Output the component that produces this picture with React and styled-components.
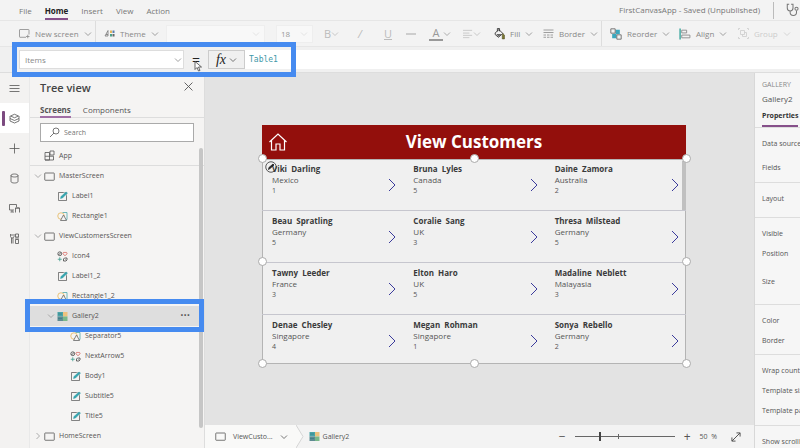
import React from "react";
import styled, { createGlobalStyle } from "styled-components";

const MENU = ["File", "Home", "Insert", "View", "Action"];

const TREE = [
  { name: "App", kind: "app", level: 0, ruled: true },
  { name: "MasterScreen", kind: "screen", level: 0, chevron: "down" },
  { name: "Label1", kind: "label", level: 1 },
  { name: "Rectangle1", kind: "shape", level: 1 },
  { name: "ViewCustomersScreen", kind: "screen", level: 0, chevron: "down" },
  { name: "Icon4", kind: "icons", level: 1 },
  { name: "Label1_2", kind: "label", level: 1 },
  { name: "Rectangle1_2", kind: "shape", level: 1 },
  { name: "Gallery2", kind: "gallery", level: 1, chevron: "down", selected: true },
  { name: "Separator5", kind: "shape", level: 2 },
  { name: "NextArrow5", kind: "icons", level: 2 },
  { name: "Body1", kind: "label", level: 2 },
  { name: "Subtitle5", kind: "label", level: 2 },
  { name: "Title5", kind: "label", level: 2 },
  { name: "HomeScreen", kind: "screen", level: 0, chevron: "right" },
];

const CUSTOMERS = [
  ["Viki", "Darling", "Mexico", 1],
  ["Bruna", "Lyles", "Canada", 5],
  ["Daine", "Zamora", "Australia", 2],
  ["Beau", "Spratling", "Germany", 5],
  ["Coralie", "Sang", "UK", 3],
  ["Thresa", "Milstead", "Germany", 5],
  ["Tawny", "Leeder", "France", 3],
  ["Elton", "Haro", "UK", 5],
  ["Madaline", "Neblett", "Malayasia", 3],
  ["Denae", "Chesley", "Singapore", 4],
  ["Megan", "Rohman", "Singapore", 1],
  ["Sonya", "Rebello", "Germany", 2],
];

const PROPERTIES = [
  { end: 4, fields: [{ name: "Data source", height: 24 }, { name: "Fields" }] },
  { end: 8, fields: [{ name: "Layout" }] },
  { end: 12, fields: [{ name: "Visible" }, { name: "Position", height: 28 }, { name: "Size" }] },
  { end: 3, fields: [{ name: "Color" }, { name: "Border" }] },
  { end: 4, fields: [{ name: "Wrap count" }, { name: "Template size" }, { name: "Template padding" }] },
  { end: 0, fields: [{ name: "Show scrollbar" }] },
];

const HANDLES = [
  [0, 0],
  [50, 0],
  [100, 0],
  [0, 50],
  [100, 50],
  [0, 100],
  [50, 100],
  [100, 100],
];

const Svg = ({ size = 11, h, box, children, ...rest }) => (
  <svg
    width={size}
    height={h || size}
    viewBox={box || "0 0 22 22"}
    fill="none"
    stroke="currentColor"
    strokeWidth="1.6"
    aria-hidden="true"
    {...rest}
  >
    {children}
  </svg>
);

const Chevron = ({ dir = "down" }) => (
  <Svg size={8} box="0 0 16 16">
    <path d={dir === "down" ? "M2 5l6 6 6-6" : "M5 2l6 6-6 6"} />
  </Svg>
);

const ScreenIcon = () => (
  <Svg>
    <rect x="1.5" y="4" width="19" height="14.5" rx="1" />
  </Svg>
);

const NewScreenIcon = () => (
  <Svg>
    <path d="M14 18.5H2a1 1 0 0 1-1-1V4a1 1 0 0 1 1-1h17a1 1 0 0 1 1 1v9M14 17h7M17.5 13.5v7" />
  </Svg>
);

const AppIcon = () => (
  <Svg>
    <path d="M2 5h9v15H2zM2 12.5h17V20H2M12 2h8v8h-8z" />
  </Svg>
);

const LabelIcon = () => (
  <Svg>
    <path d="M13 3H3v16h16V9" stroke="#666" />
    <path d="M3 3h16v16" stroke="#777" strokeWidth="1" />
    <path d="M7 15l1-4L18 2l3 2L11 14z" fill="#35a3ad" stroke="#35a3ad" strokeWidth="1" />
  </Svg>
);

const ShapeIcon = () => (
  <Svg>
    <circle cx="8" cy="10" r="6.5" stroke="#e3b65c" />
    <path d="M11 3h9v14h-3" stroke="#4fa8a8" />
    <path d="M7 19l6-11 6 11z" stroke="#666" fill="#f4f3f2" />
  </Svg>
);

const IconsIcon = () => (
  <Svg>
    <circle cx="5.5" cy="5.5" r="3.8" stroke="#444" />
    <path d="M3 8l5-5" stroke="#444" />
    <path d="M16 9.5l-4-4c-.5-3 3-4 4-1.5 1-2.5 4.5-1.5 4 1.5z" stroke="#d35c56" />
    <path d="M5.5 12.5v8M1.5 16.5h8" stroke="#3c9d8f" />
    <path d="M13 20v-4l2-2h5M20 14v4l-2 2h-5M16 17h1" stroke="#444" />
  </Svg>
);

const GalleryIcon = () => (
  <Svg stroke="none">
    <path d="M1 2h11v9H1z" fill="#4aa5a8" />
    <path d="M12 2h9v9h-9z" fill="#eec27e" />
    <path d="M1 11h11v9H1z" fill="#5e8b92" />
    <path d="M12 11h9v9h-9z" fill="#7ab88a" />
    <path d="M2 6h8M2 15h8" stroke="#3b7f88" />
  </Svg>
);

const ThemeIcon = () => (
  <Svg>
    <path d="M2 16L8 5v11zM4 13h4" stroke="#777" />
    <rect x="12" y="5" width="4" height="5" fill="#e3b65c" stroke="none" />
    <rect x="17" y="5" width="4" height="5" fill="#5a7fb0" stroke="none" />
    <rect x="12" y="12" width="4" height="5" fill="#4aa088" stroke="none" />
    <rect x="17" y="12" width="4" height="5" fill="#666" stroke="none" />
  </Svg>
);

const FillIcon = () => (
  <Svg size={12}>
    <path d="M4 9l7-6 7 7-8 7-6-5zM8 6V1h4v5" stroke="#333" />
    <path d="M6 11h10l-6 5z" fill="#666" stroke="none" />
    <path d="M18 10l3 3v7h-4v-6z" fill="#7d7a32" stroke="#4d4a22" strokeWidth="1" />
  </Svg>
);

const BorderIcon = () => (
  <Svg>
    <path d="M1 4h20M1 9h20" />
    <path d="M1 14h20M1 18.5h20" strokeDasharray="5 2" />
  </Svg>
);

const ReorderIcon = () => (
  <Svg size={12}>
    <path d="M10 3h8v8h-8zM4 11h8v8H4z" fill="#3ba7bd" stroke="none" />
    <path d="M1.5 1.5h8v8h-8zM12.5 12.5h8v8h-8z" stroke="#666" fill="#f3f3f3" />
  </Svg>
);

const AlignIcon = () => (
  <Svg size={12}>
    <path d="M2 1v20" stroke="#35a59b" strokeWidth="2.5" />
    <path d="M5 4h9v5H5zM5 13h15v5H5z" />
  </Svg>
);

const GroupIcon = () => (
  <Svg>
    <path d="M4 1H1v3M18 1h3v3M4 21H1v-3M18 21h3v-3M5 5h8v8H5zM9 13v4h8V9h-4" />
  </Svg>
);

const LinesIcon = () => (
  <Svg size={10}>
    <path d="M0 3h20M0 9h14M0 14h20M0 19h14" />
  </Svg>
);

const ICONS = {
  app: AppIcon,
  screen: ScreenIcon,
  label: LabelIcon,
  shape: ShapeIcon,
  icons: IconsIcon,
  gallery: GalleryIcon,
};

const RAIL = [
  { name: "Menu", path: <path d="M1 5h20M1 11h20M1 17h20" /> },
  {
    name: "Tree view",
    active: true,
    path: <path d="M11 2.5l8 3.5-8 3.5L3 6zM2 6v10l9 4 9-4V6M2 11l9 4 9-4" />,
  },
  { name: "Insert", path: <path d="M11 1v20M1 11h20" /> },
  {
    name: "Data",
    path: <path d="M4 5c0-4 14-4 14 0v12c0 4-14 4-14 0zM4 5c0 4 14 4 14 0" />,
  },
  {
    name: "Media",
    path: <path d="M10 14H1V3h14v5M3 18h7M6 14v4M13 19v-9h8v9M13 10h8" />,
  },
  {
    name: "Advanced tools",
    path: <path d="M5 21V10M8 21V10M3 2v5l2 3h3l2-3V2M6 2v4M13 2h6v6h-6zM14 8v5M18 8v5M13 13h6v8h-6z" />,
  },
];

const MenuBar = () => (
  <MenuRow>
    <nav>
      {MENU.map((item) => (
        <MenuItem key={item} $active={item === "Home"}>
          {item}
        </MenuItem>
      ))}
    </nav>
    <FileStatus>
      <span>FirstCanvasApp - Saved (Unpublished)</span>
      <CheckerButton aria-label="App checker">
        <Svg size={14}>
          <path d="M5 2H2v6c0 6 9 6 9 0V2H8M6.5 13v2c0 6 10 6 10 0v-3" />
          <circle cx="16.5" cy="9" r="2.5" />
        </Svg>
      </CheckerButton>
    </FileStatus>
  </MenuRow>
);

const Toolbar = () => (
  <ToolRow>
    <Tool $w={77} $ruled>
      <NewScreenIcon />
      New screen
      <Chevron />
    </Tool>
    <Tool $w={62}>
      <ThemeIcon />
      Theme
      <Chevron />
    </Tool>
    <ToolBox $w={99} aria-label="Font">
      <Chevron />
    </ToolBox>
    <ToolBox $w={37} aria-label="Font size">
      18
      <Chevron />
    </ToolBox>
    <Glyph $w={34} $faded>
      B
      <Chevron />
    </Glyph>
    <Glyph $w={26} $faded>
      <i>/</i>
    </Glyph>
    <Glyph $w={22} $faded>
      <u>U</u>
    </Glyph>
    <Glyph $w={23} $faded>
      <Svg size={10} strokeWidth="3">
        <path d="M0 11h22" />
      </Svg>
    </Glyph>
    <Glyph $w={34}>
      <FontColor>A</FontColor>
      <Chevron />
    </Glyph>
    <Glyph $w={30} $faded>
      <LinesIcon />
      <Chevron />
    </Glyph>
    <Tool $w={50}>
      <FillIcon />
      Fill
      <Chevron />
    </Tool>
    <Tool $w={59} $ruled>
      <BorderIcon />
      Border
      <Chevron />
    </Tool>
    <Tool $w={69}>
      <ReorderIcon />
      Reorder
      <Chevron />
    </Tool>
    <Tool $w={59}>
      <AlignIcon />
      Align
      <Chevron />
    </Tool>
    <Tool $w={59} disabled>
      <GroupIcon />
      Group
      <Chevron />
    </Tool>
  </ToolRow>
);

const FormulaBar = () => (
  <FormulaRow>
    <FormulaGroup>
      <PropertyPicker>
        <select aria-label="Property" defaultValue="Items">
          <option>Items</option>
        </select>
        <Chevron />
      </PropertyPicker>
      <Equals>
        =
        <Cursor size={8} h={11} box="0 0 16 22">
          <path d="M2 1v16l4-4 3 7 3-1-3-7h6z" fill="#fff" stroke="#444" />
        </Cursor>
      </Equals>
      <FxButton aria-label="Functions">
        <em>fx</em>
        <Chevron />
      </FxButton>
    </FormulaGroup>
    <FormulaInput aria-label="Formula" defaultValue="Table1" />
  </FormulaRow>
);

const TreeView = () => (
  <TreePanel>
    <TreeHeader>
      <h2>Tree view</h2>
      <button aria-label="Close">
        <Svg size={9} box="0 0 16 16">
          <path d="M1 1l14 14M15 1L1 15" />
        </Svg>
      </button>
    </TreeHeader>
    <TreeTabs>
      <TreeTab $active>Screens</TreeTab>
      <TreeTab>Components</TreeTab>
    </TreeTabs>
    <SearchBox>
      <Svg size={11}>
        <circle cx="14" cy="8" r="6" />
        <path d="M10 12l-8 8" />
      </Svg>
      <input type="search" placeholder="Search" aria-label="Search" />
    </SearchBox>
    <TreeList>
      {TREE.map((node) => {
        const Icon = ICONS[node.kind];
        return (
          <TreeItem key={node.name} $ruled={node.ruled} $selected={node.selected}>
            <TreeButton $level={node.level}>
              <Twisty>{node.chevron && <Chevron dir={node.chevron} />}</Twisty>
              <Icon />
              {node.name}
            </TreeButton>
            {node.selected && <More aria-label="More">···</More>}
          </TreeItem>
        );
      })}
      <TreeScroll />
    </TreeList>
  </TreePanel>
);

const Canvas = () => (
  <Stage>
    <AppHeader>
      <Svg size={20} box="0 0 40 40" strokeWidth="2.4">
        <path d="M3 20L20 4l17 16M7 17v19h9V24h8v12h9V17" />
      </Svg>
      <h1>View Customers</h1>
    </AppHeader>
    <Gallery>
      {CUSTOMERS.map(([first, last, country, count]) => (
        <Card key={first}>
          <div>
            <strong>{`${first}  ${last}`}</strong>
            <span>{country}</span>
            <small>{count}</small>
          </div>
          <NextButton aria-label="Next">
            <Svg size={8} h={14} box="0 0 16 28" strokeWidth="2">
              <path d="M2 2l12 12L2 26" />
            </Svg>
          </NextButton>
        </Card>
      ))}
      <GalleryScroll />
      <EditBadge>
        <Svg size={12} box="0 0 24 24">
          <circle cx="12" cy="12" r="10.5" stroke="#333" />
          <path d="M7 17l1-4 8-7 2 2-8 7z" fill="#222" stroke="#222" />
        </Svg>
      </EditBadge>
      {HANDLES.map(([x, y]) => (
        <Handle key={`${x}-${y}`} $x={x} $y={y} />
      ))}
    </Gallery>
  </Stage>
);

const StatusBar = () => (
  <StatusRow>
    <Crumb $current>
      <ScreenIcon />
      ViewCusto...
      <Chevron />
    </Crumb>
    <Svg size={8} h={23} box="0 0 8 23" strokeWidth="1">
      <path d="M0 0l7 11.5L0 23z" fill="#f9f9f8" stroke="none" />
      <path d="M0 0l7 11.5L0 23" stroke="#d5d5d5" />
    </Svg>
    <Crumb>
      <GalleryIcon />
      Gallery2
    </Crumb>
    <Zoom>
      <button aria-label="Zoom out">−</button>
      <ZoomSlider type="range" min="0" max="200" defaultValue="50" aria-label="Zoom" />
      <button aria-label="Zoom in">+</button>
      <output>50&nbsp;&nbsp;%</output>
      <button aria-label="Fit to window">
        <Svg size={10} strokeWidth="2.2">
          <path d="M2 20L20 2M12 2h8v8M2 12v8h8" />
        </Svg>
      </button>
    </Zoom>
  </StatusRow>
);

const PropertyPanel = () => (
  <Panel>
    <PanelHeader>
      <small>GALLERY</small>
      <span>Gallery2</span>
      <PanelTab>Properties</PanelTab>
    </PanelHeader>
    {PROPERTIES.map(({ end, fields }) => (
      <Section key={fields[0].name} $end={end}>
        {fields.map(({ name, height = 20 }) => (
          <Field key={name} $height={height}>
            {name}
          </Field>
        ))}
      </Section>
    ))}
  </Panel>
);

const App = () => (
  <Shell>
    <GlobalStyle />
    <MenuBar />
    <Toolbar />
    <FormulaBar />
    <Workspace>
      <Rail>
        {RAIL.map(({ name, active, path }) => (
          <RailButton key={name} aria-label={name} $active={active}>
            <Svg>{path}</Svg>
          </RailButton>
        ))}
      </Rail>
      <TreeView />
      <Main>
        <Canvas />
        <StatusBar />
      </Main>
      <PropertyPanel />
    </Workspace>
  </Shell>
);

const GlobalStyle = createGlobalStyle`
  * {
    box-sizing: border-box;
  }

  body {
    margin: 0;
    font: 8px/12px "Open Sans", "Noto Sans", sans-serif;
    color: #555;
    background: #f3f3f3;
  }

  button,
  input,
  select {
    margin: 0;
    padding: 0;
    border: 0;
    background: none;
    font: inherit;
    color: inherit;
    outline: none;
  }

  svg {
    flex: none;
  }
`;

const Shell = styled.div`
  display: flex;
  flex-direction: column;
  height: 100vh;
  overflow: hidden;
  white-space: nowrap;
`;

const MenuRow = styled.header`
  display: flex;
  justify-content: space-between;
  height: 21px;
  padding-left: 19px;
  border-bottom: 1px solid #e6e6e6;

  nav {
    display: flex;
    gap: 13px;
    padding-top: 4px;
  }
`;

const MenuItem = styled.button`
  height: 16px;
  color: ${(p) => (p.$active ? "#222" : "#777")};
  font-weight: ${(p) => (p.$active ? 700 : 400)};
  border-bottom: 2px solid ${(p) => (p.$active ? "#86508a" : "transparent")};
`;

const FileStatus = styled.div`
  display: flex;
  align-items: center;
  gap: 13px;
  color: #777;
`;

const CheckerButton = styled.button`
  display: flex;
  align-items: center;
  height: 17px;
  padding-left: 12px;
  border-left: 1px solid #bbb;
`;

const ToolRow = styled.div`
  display: flex;
  align-items: center;
  height: 26px;
  padding-left: 19px;
  border-bottom: 1px solid #e6e6e6;
`;

const Tool = styled.button`
  display: flex;
  align-items: center;
  gap: 5px;
  flex: 0 0 ${(p) => p.$w}px;
  height: 25px;
  margin-right: ${(p) => (p.$ruled ? 8 : 0)}px;
  color: ${(p) => (p.disabled ? "#ccc" : "#888")};
  border-right: ${(p) => (p.$ruled ? "1px solid #ddd" : "0")};
`;

const ToolBox = styled.button`
  display: flex;
  align-items: center;
  flex: 0 0 ${(p) => p.$w}px;
  height: 18px;
  margin-right: 11px;
  padding: 0 4px;
  border: 1px solid #eee;
  background: #f8f8f8;
  color: #999;

  svg {
    margin-left: auto;
    color: #ddd;
  }
`;

const Glyph = styled.button`
  display: flex;
  align-items: center;
  flex: 0 0 ${(p) => p.$w}px;
  font-size: 11px;
  color: ${(p) => (p.$faded ? "#bbb" : "#999")};
`;

const FontColor = styled.span`
  width: 14px;
  line-height: 12px;
  border-bottom: 2px solid #999;
`;

const FormulaRow = styled.div`
  display: flex;
  align-items: center;
  height: 26px;
  padding-left: 19px;
  background: #f0f0f0;
  border-bottom: 1px solid #ddd;
`;

/* the blue frame reaches past the bar, over the rows above and below */
const FormulaGroup = styled.div`
  position: relative;
  z-index: 2;
  display: flex;
  align-items: center;
  flex: none;

  &::after {
    content: "";
    position: absolute;
    inset: -8px -51px -8px -7px;
    border: 5px solid #468bf0;
    pointer-events: none;
  }
`;

const PropertyPicker = styled.div`
  position: relative;
  display: flex;
  align-items: center;
  width: 165px;
  height: 19px;
  padding: 0 1px 0 5px;
  border: 1px solid #ddd;
  background: #fff;
  color: #888;

  select {
    flex: 1;
    appearance: none;
  }
`;

const Equals = styled.span`
  position: relative;
  width: 24px;
  text-align: center;
  font-size: 14px;
  color: #222;
`;

const Cursor = styled(Svg)`
  position: absolute;
  left: 10px;
  top: 7px;
`;

const FxButton = styled.button`
  display: flex;
  align-items: center;
  justify-content: center;
  gap: 3px;
  width: 37px;
  height: 19px;
  border: 1px solid #ccc;

  em {
    font: italic 14px "Liberation Serif", serif;
    color: #222;
  }
`;

const FormulaInput = styled.input`
  flex: 1;
  min-width: 0;
  height: 19px;
  padding-left: 4px;
  background: #fff;
  font-family: "DejaVu Sans Mono", monospace;
  color: #3e98a8;
`;

const Workspace = styled.div`
  display: flex;
  flex: 1;
  min-height: 0;
`;

const Rail = styled.nav`
  display: flex;
  flex-direction: column;
  flex: 0 0 30px;
  background: #f3f2f1;
  border-right: 1px solid #e9e9e9;
`;

const RailButton = styled.button`
  display: flex;
  align-items: center;
  justify-content: center;
  position: relative;
  height: 30px;
  background: ${(p) => (p.$active ? "#fff" : "none")};

  &::before {
    content: "";
    display: ${(p) => (p.$active ? "block" : "none")};
    position: absolute;
    left: 2px;
    top: 8px;
    width: 3px;
    height: 15px;
    border-radius: 1px;
    background: #7c4a80;
  }
`;

const TreePanel = styled.aside`
  display: flex;
  flex-direction: column;
  flex: 0 0 175px;
  background: #f5f4f3;
  border-right: 1px solid #ddd;
`;

const TreeHeader = styled.div`
  display: flex;
  align-items: center;
  justify-content: space-between;
  height: 30px;
  padding: 0 11px 0 10px;

  h2 {
    margin: 0;
    font-size: 11px;
    font-weight: 600;
    color: #444;
  }
`;

const TreeTabs = styled.div`
  display: flex;
  gap: 12px;
  height: 15px;
  padding-left: 10px;
  border-bottom: 1px solid #ddd;
`;

const TreeTab = styled.button`
  height: 15px;
  font-weight: ${(p) => (p.$active ? 700 : 400)};
  border-bottom: 2px solid ${(p) => (p.$active ? "#a06ea4" : "transparent")};
`;

const SearchBox = styled.label`
  display: flex;
  align-items: center;
  gap: 4px;
  height: 19px;
  margin: 5px 10px 4px;
  padding: 0 8px;
  border: 1px solid #aaa;
  background: #fff;
  font-size: 7px;

  input {
    flex: 1;
    min-width: 0;
  }
`;

const TreeList = styled.ul`
  position: relative;
  flex: 1;
  margin: 0;
  padding: 0;
  list-style: none;
  font-size: 7px;
`;

const TreeItem = styled.li`
  position: relative;
  display: flex;
  height: 20px;
  border-bottom: ${(p) => (p.$ruled ? "1px solid #ddd" : "0")};
  background: ${(p) => (p.$selected ? "#dedede" : "none")};

  &::after {
    content: "";
    display: ${(p) => (p.$selected ? "block" : "none")};
    position: absolute;
    z-index: 2;
    inset: -7px 0 -6px -5px;
    border: 5px solid #468bf0;
    pointer-events: none;
  }
`;

const TreeButton = styled.button`
  display: flex;
  align-items: center;
  gap: 4px;
  flex: 1;
  padding-left: ${(p) => 4 + p.$level * 13}px;
`;

const Twisty = styled.span`
  display: flex;
  width: 10px;
  margin-right: -4px;
  color: #999;
`;

const More = styled.button`
  padding-right: 14px;
  font-size: 12px;
  font-weight: 600;
`;

const TreeScroll = styled.div`
  position: absolute;
  top: 2px;
  right: 1px;
  bottom: 20px;
  width: 4px;
  border-radius: 2px;
  background: #c6c6c6;
`;

const Main = styled.main`
  display: flex;
  flex-direction: column;
  flex: 1;
  min-width: 0;
`;

const Stage = styled.div`
  flex: 1;
  padding: 52px 68px 0 57px;
  background: #e3e3e3;
`;

const AppHeader = styled.div`
  display: grid;
  grid-template-columns: 32px 1fr 32px;
  align-items: center;
  height: 34px;
  background: #930f0c;
  color: #fff;

  svg {
    margin-left: 6px;
  }

  h1 {
    margin: 0;
    text-align: center;
    font-size: 17px;
    font-weight: 700;
  }
`;

const Gallery = styled.div`
  position: relative;
  display: grid;
  grid-template-columns: repeat(3, 1fr);
  grid-auto-rows: 52px;
  height: 205px;
  background: #f0f0f0;
  box-shadow: inset 0 0 0 1px #b4b4b4;
`;

const Card = styled.article`
  display: flex;
  justify-content: space-between;
  padding: 4px 7px 4px 10px;
  border-bottom: 1px solid #c6c6ce;

  &:nth-child(n + 10) {
    border-bottom: 0;
  }

  div {
    display: flex;
    flex-direction: column;
    line-height: 11px;
  }

  strong {
    font-weight: 700;
    color: #3a3a3a;
    white-space: pre;
  }

  small {
    font-size: 7px;
  }
`;

const NextButton = styled.button`
  display: flex;
  align-self: center;
  color: #3c3c9c;
`;

const GalleryScroll = styled.div`
  position: absolute;
  top: 2px;
  right: 0;
  width: 4px;
  height: 49px;
  background: #c0c0c0;
`;

const EditBadge = styled.div`
  position: absolute;
  left: 3px;
  top: 2px;
  display: flex;
`;

const Handle = styled.span`
  position: absolute;
  left: ${(p) => p.$x}%;
  top: ${(p) => p.$y}%;
  width: 9px;
  height: 9px;
  margin: -5px 0 0 -4px;
  border: 1px solid #aaa;
  border-radius: 50%;
  background: #fff;
`;

const StatusRow = styled.footer`
  display: flex;
  align-items: center;
  flex: 0 0 23px;
  background: #f3f3f3;
  font-size: 7px;
`;

const Crumb = styled.button`
  display: flex;
  align-items: center;
  gap: ${(p) => (p.$current ? 7 : 3)}px;
  height: 23px;
  padding: 0 8px 0 ${(p) => (p.$current ? 10 : 5)}px;
  background: ${(p) => (p.$current ? "#f9f9f8" : "none")};
`;

const Zoom = styled.div`
  display: flex;
  align-items: center;
  gap: 9px;
  margin-left: auto;
  padding-right: 13px;

  button {
    display: flex;
    font-size: 12px;
  }

  output {
    padding-right: 5px;
  }
`;

const ZoomSlider = styled.input`
  appearance: none;
  width: 100px;
  height: 9px;
  background: linear-gradient(#666, #666) 0 4px / 100% 1px no-repeat,
    linear-gradient(#666, #666) 43px 2px / 1px 5px no-repeat;

  &::-webkit-slider-thumb {
    appearance: none;
    width: 2px;
    height: 9px;
    background: #444;
  }
`;

const Panel = styled.aside`
  flex: 0 0 46px;
  overflow: hidden;
  background: #f6f6f6;
  border-left: 1px solid #d8d8d8;
  font-size: 7px;
`;

const PanelHeader = styled.div`
  display: flex;
  flex-direction: column;
  align-items: flex-start;
  height: 55px;
  padding: 6px 0 0 7px;
  border-bottom: 1px solid #ddd;

  small {
    font-size: 7px;
    color: #888;
  }

  span {
    font-size: 8px;
    line-height: 16px;
  }
`;

const PanelTab = styled.button`
  height: 20px;
  font-weight: 700;
  color: #333;
  border-bottom: 2px solid #86508a;
`;

const Section = styled.div`
  padding: 6px 0 ${(p) => p.$end}px 7px;
  border-bottom: 1px solid #ddd;
`;

const Field = styled.div`
  height: ${(p) => p.$height}px;
  line-height: 20px;
`;

export default App;
